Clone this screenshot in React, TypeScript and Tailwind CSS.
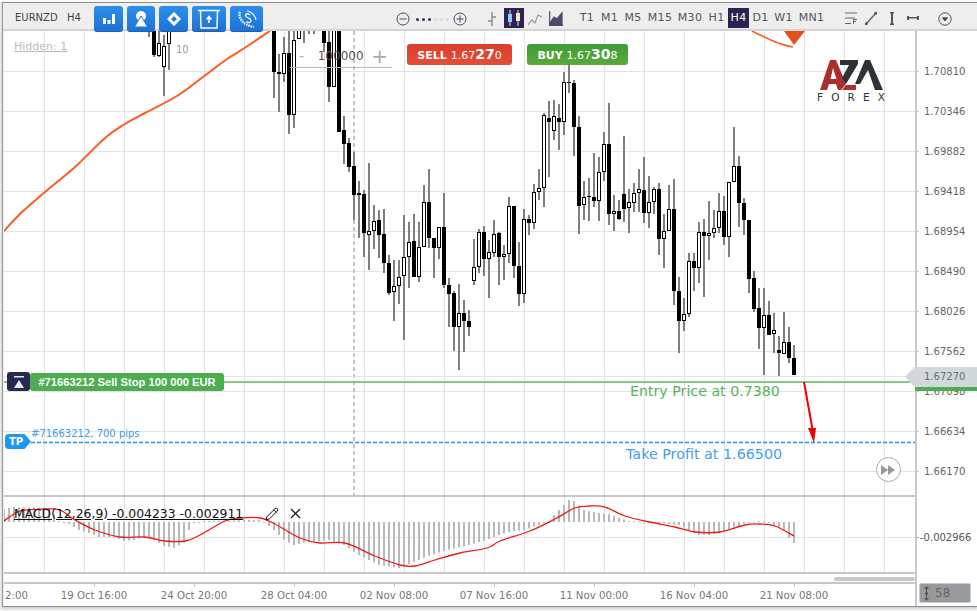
import { Pencil, X } from 'lucide-react';

// [x, wickTop, bodyTop, bodyBottom, wickBottom, filled]
type Candle = [number, number, number, number, number, number];

const candles: Candle[] = [
  [149, 20, 20, 30, 37, 0],
  [154, 20, 20, 55, 57, 1],
  [159, 30, 43, 56, 57, 0],
  [164, 35, 46, 67, 96, 0],
  [169, 20, 20, 44, 70, 0],
  [274, 20, 20, 72, 98, 1],
  [279, 54, 72, 74, 112, 1],
  [284, 37, 53, 74, 82, 0],
  [289, 20, 53, 115, 134, 1],
  [294, 20, 40, 115, 128, 0],
  [299, 20, 20, 39, 39, 0],
  [304, 20, 20, 30, 43, 0],
  [309, 20, 20, 30, 34, 0],
  [314, 20, 20, 30, 34, 0],
  [324, 20, 20, 43, 52, 1],
  [329, 20, 42, 87, 102, 1],
  [334, 20, 20, 87, 87, 0],
  [339, 20, 20, 132, 132, 1],
  [344, 116, 130, 144, 164, 1],
  [349, 138, 143, 167, 172, 1],
  [354, 152, 166, 195, 220, 1],
  [359, 181, 193, 195, 238, 1],
  [364, 190, 194, 233, 257, 1],
  [369, 163, 231, 235, 270, 0],
  [374, 205, 221, 231, 249, 0],
  [379, 210, 220, 235, 258, 1],
  [384, 209, 234, 263, 273, 1],
  [389, 255, 263, 293, 295, 1],
  [394, 260, 286, 292, 321, 0],
  [399, 260, 277, 286, 304, 0],
  [404, 215, 257, 276, 340, 0],
  [409, 222, 242, 257, 288, 0],
  [414, 214, 241, 277, 277, 1],
  [419, 222, 247, 277, 282, 0],
  [424, 185, 202, 247, 247, 0],
  [429, 169, 202, 238, 248, 1],
  [434, 238, 238, 248, 278, 1],
  [439, 227, 227, 248, 259, 0],
  [444, 193, 227, 285, 288, 1],
  [449, 278, 285, 294, 327, 1],
  [454, 291, 293, 327, 351, 1],
  [459, 284, 313, 327, 370, 0],
  [464, 300, 313, 321, 352, 1],
  [469, 310, 321, 327, 336, 1],
  [474, 239, 267, 281, 285, 0],
  [479, 229, 232, 267, 273, 0],
  [484, 226, 232, 259, 276, 1],
  [489, 240, 252, 259, 298, 0],
  [494, 220, 234, 253, 257, 0],
  [499, 232, 233, 257, 285, 1],
  [504, 245, 254, 257, 280, 0],
  [509, 197, 206, 254, 263, 0],
  [514, 206, 206, 266, 278, 1],
  [519, 242, 266, 294, 306, 1],
  [524, 209, 219, 294, 303, 0],
  [529, 215, 219, 223, 235, 1],
  [534, 184, 192, 223, 229, 0],
  [539, 169, 188, 192, 200, 0],
  [544, 113, 115, 188, 207, 0],
  [549, 101, 118, 122, 177, 1],
  [554, 100, 116, 131, 140, 0],
  [559, 104, 118, 122, 150, 1],
  [564, 72, 82, 122, 135, 0],
  [569, 60, 82, 83, 93, 1],
  [574, 80, 83, 127, 156, 1],
  [579, 116, 127, 206, 234, 1],
  [584, 181, 197, 205, 220, 0],
  [589, 178, 196, 197, 221, 1],
  [594, 153, 197, 201, 207, 1],
  [599, 157, 172, 201, 221, 0],
  [604, 132, 144, 172, 181, 0],
  [609, 103, 144, 214, 225, 1],
  [614, 195, 211, 214, 231, 0],
  [619, 200, 211, 219, 220, 1],
  [624, 136, 194, 209, 222, 1],
  [629, 189, 202, 208, 233, 0],
  [634, 183, 193, 203, 212, 0],
  [639, 169, 189, 193, 212, 0],
  [644, 157, 190, 213, 223, 1],
  [649, 176, 202, 213, 228, 0],
  [654, 187, 189, 202, 214, 0],
  [659, 183, 189, 239, 255, 1],
  [664, 214, 231, 239, 268, 0],
  [669, 185, 209, 231, 231, 0],
  [674, 179, 209, 291, 305, 1],
  [679, 277, 291, 321, 353, 1],
  [684, 298, 314, 321, 331, 0],
  [689, 253, 261, 314, 317, 0],
  [694, 253, 261, 268, 291, 1],
  [699, 222, 232, 268, 283, 0],
  [704, 219, 232, 236, 297, 1],
  [709, 201, 233, 236, 260, 0],
  [714, 210, 228, 233, 238, 0],
  [719, 193, 211, 228, 233, 0],
  [724, 196, 211, 237, 245, 1],
  [729, 182, 182, 237, 257, 0],
  [734, 127, 166, 182, 182, 0],
  [739, 156, 166, 203, 227, 1],
  [744, 198, 203, 220, 235, 1],
  [749, 220, 220, 279, 293, 1],
  [754, 271, 278, 309, 312, 1],
  [759, 288, 308, 328, 349, 1],
  [764, 288, 315, 328, 375, 0],
  [769, 301, 315, 335, 335, 1],
  [774, 313, 330, 334, 353, 0],
  [779, 336, 350, 353, 377, 1],
  [784, 312, 342, 354, 354, 0],
  [789, 327, 342, 358, 363, 1],
  [794, 345, 358, 375, 375, 1],
];

const gridX = Array.from({ length: 22 }, (_, i) => 44 + i * 40);
const gridY = [71, 111, 151, 191, 231, 271, 311, 351, 391, 431, 471];
const prices = ['1.70810', '1.70346', '1.69882', '1.69418', '1.68954', '1.68490', '1.68026', '1.67562', '1.67098', '1.66634', '1.66170'];
const timeframes = [
  { t: 'T1', w: 'w-[22px]' },
  { t: 'M1', w: 'w-[23px]' },
  { t: 'M5', w: 'w-[24px]' },
  { t: 'M15', w: 'w-[30px]' },
  { t: 'M30', w: 'w-[30px]' },
  { t: 'H1', w: 'w-[23px]' },
  { t: 'H4', w: 'w-[21px]' },
  { t: 'D1', w: 'w-[23px]' },
  { t: 'W1', w: 'w-[23px]' },
  { t: 'MN1', w: 'w-[33px]' },
];
const times = ['19 Oct 16:00', '24 Oct 20:00', '28 Oct 04:00', '02 Nov 08:00', '07 Nov 16:00', '11 Nov 00:00', '16 Nov 04:00', '21 Nov 08:00'];

// histogram outline, x then y of the bar end (zero line is y=522)
const histPts: [number, number][] = [
  [4, 509], [14, 507], [49, 508], [59, 521], [69, 524], [79, 530], [89, 533], [99, 537], [114, 537], [124, 541], [134, 540], [144, 537], [154, 540], [164, 546], [174, 548], [184, 543], [189, 530], [194, 523],
  [204, 521], [259, 520], [264, 522], [274, 530], [284, 540], [294, 545], [309, 542], [329, 540], [344, 545], [359, 555], [379, 565], [399, 568], [414, 562], [429, 556], [444, 551], [469, 545], [489, 539], [499, 535],
  [509, 532], [524, 530], [539, 525], [549, 522], [554, 515], [564, 505], [569, 500], [574, 501], [584, 510], [599, 513], [609, 514], [619, 518], [629, 521], [649, 522], [669, 524], [679, 525], [689, 530], [699, 535], [709, 535],
  [719, 533], [729, 529], [739, 526], [749, 522], [759, 521], [769, 522], [774, 526], [784, 530], [789, 538], [794, 543],
];

const histAt = (x: number) => {
  for (let i = 1; i < histPts.length; i++) {
    const [x0, y0] = histPts[i - 1];
    const [x1, y1] = histPts[i];
    if (x <= x1) return y0 + ((y1 - y0) * (x - x0)) / (x1 - x0);
  }
  return 522;
};

const histBars = Array.from({ length: 159 }, (_, i) => 4 + i * 5);

const signal: [number, number][] = [
  [4, 521], [20, 511], [45, 509], [60, 510], [75, 520], [95, 530], [120, 537], [145, 537], [165, 541], [185, 541], [200, 535], [225, 521], [240, 518], [260, 518], [275, 524], [300, 538], [320, 543], [345, 543], [375, 556], [400, 565], [415, 566], [435, 560], [460, 553], [487, 548],
  [500, 541], [530, 531], [555, 519], [575, 508], [590, 506], [605, 507], [625, 516], [650, 522], [675, 527], [695, 532], [720, 532], [745, 525], [760, 524], [775, 526], [794, 536],
];

const ma: [number, number][] = [[4, 231], [22, 212], [45, 192], [75, 167], [105, 138], [125, 124], [145, 113], [177, 96], [203, 77], [227, 59], [243, 49], [270, 31]];

// catmull-rom through the points so the lines don't look angular
const smooth = (pts: [number, number][]) => {
  let d = `M${pts[0][0]} ${pts[0][1]}`;
  for (let i = 0; i < pts.length - 1; i++) {
    const p0 = pts[Math.max(i - 1, 0)];
    const p1 = pts[i];
    const p2 = pts[i + 1];
    const p3 = pts[Math.min(i + 2, pts.length - 1)];
    d += `C${p1[0] + (p2[0] - p0[0]) / 6} ${p1[1] + (p2[1] - p0[1]) / 6} ${p2[0] - (p3[0] - p1[0]) / 6} ${p2[1] - (p3[1] - p1[1]) / 6} ${p2[0]} ${p2[1]}`;
  }
  return d;
};

function BlueButton({ w, children }: { w: string; children: React.ReactNode }) {
  return (
    <div className={`${w} h-[26px] rounded-[3px] bg-gradient-to-b from-[#2d8fea] to-[#1d72d4] border-b border-[#1a5fb0] flex items-center justify-center`}>
      {children}
    </div>
  );
}

function Toolbar() {
  return (
    <div className="h-[28px] shrink-0 bg-[#eeeeee] border-b-2 border-[#d4d4d4] flex items-start relative z-10 text-[#555]">
      <span className="ml-[12px] mt-[9px] w-[52px] text-[10px] leading-[12px] text-[#444]">EURNZD</span>
      <span className="w-[27px] mt-[9px] text-[10px] leading-[12px] text-[#444]">H4</span>
      <div className="flex gap-[4px] mt-[3px]">
        <BlueButton w="w-[29px]">
          <svg width="12" height="10" viewBox="0 0 12 10" fill="white"><rect y="4" width="3" height="6" /><rect x="4.5" y="6" width="3" height="4" /><rect x="9" width="3" height="10" /></svg>
        </BlueButton>
        <BlueButton w="w-[28px]">
          <svg width="14" height="16" viewBox="0 0 14 16" fill="white"><circle cx="7" cy="5" r="5" /><path d="M7 5 13.5 16H.5Z" stroke="#2580df" strokeWidth="1" /></svg>
        </BlueButton>
        <BlueButton w="w-[29px]">
          <svg width="14" height="14" viewBox="0 0 14 14"><path d="M7 2 12 7 7 12 2 7Z" fill="none" stroke="white" strokeWidth="3" /></svg>
        </BlueButton>
        <BlueButton w="w-[34px]">
          <svg width="24" height="20" viewBox="0 0 24 20" fill="none" stroke="white"><path d="M1 1.5H23" strokeWidth="1.5" /><path d="M3.5 1.5 4 19H20L20.5 1.5" strokeWidth="1.4" /><path d="M12 14V8M9.5 10.5 12 7.5 14.5 10.5" strokeWidth="1.5" /></svg>
        </BlueButton>
        <BlueButton w="w-[33px]">
          <svg width="20" height="20" viewBox="0 0 20 20" fill="none" stroke="white" strokeWidth="1.3"><path d="M3 3C1 8 5 16 17 18" strokeDasharray="1.5 1" strokeWidth="2.4" /><path d="M13 6C11 3.5 7.5 5 9 7.5 10 9 14 9 14 11.5 14 14 11 14 9.5 12.5" /><path d="M10 2C14 2 18 6 19 11" strokeWidth="1.2" /></svg>
        </BlueButton>
      </div>

      <div className="ml-[133px] mt-[9px] flex items-center">
        <svg width="14" height="14" viewBox="0 0 14 14" fill="none" stroke="#4a4a68" strokeWidth="1"><circle cx="7" cy="7" r="6" /><path d="M3.5 7H10.5" /></svg>
        <div className="ml-[6px] mr-[3px] flex gap-[3px] items-center w-[34px]">
          <i className="w-[3px] h-[3px] rounded-full bg-[#33304f]" />
          <i className="w-[3px] h-[3px] rounded-full bg-[#33304f]" />
          <i className="w-[3px] h-[3px] rounded-full bg-[#33304f]" />
          <i className="w-[3px] h-[3px] rounded-full bg-[#d8d8d8]" />
          <i className="w-[3px] h-[3px] rounded-full bg-[#d8d8d8]" />
          <i className="w-[3px] h-[3px] rounded-full bg-[#d8d8d8]" />
        </div>
        <svg width="14" height="14" viewBox="0 0 14 14" fill="none" stroke="#4a4a68" strokeWidth="1"><circle cx="7" cy="7" r="6" /><path d="M3.5 7H10.5M7 3.5V10.5" /></svg>
      </div>

      <svg className="ml-[20px] mt-[9px]" width="10" height="14" viewBox="0 0 10 14" fill="none" stroke="#888" strokeWidth="1.4"><path d="M5 0V14M1 9H5M5 5H9" /></svg>
      <div className="ml-[7px] mt-[5px] w-[20px] h-[20px] bg-[#2e2250] flex items-center justify-center gap-[3px]">
        <svg width="16" height="16" viewBox="0 0 16 16"><path d="M4 0V16M12 0V16" stroke="#e9e4f5" strokeWidth="1" /><rect x="2" y="4" width="4" height="8" fill="#8fd0f0" /><rect x="10" y="3" width="4" height="8" fill="#f3e6c8" /></svg>
      </div>
      <svg className="ml-[4px] mt-[9px]" width="14" height="14" viewBox="0 0 14 14" fill="none" stroke="#999" strokeWidth="1.2"><path d="M0 13 4 8 7 11 10 3 14 5" /></svg>
      <svg className="ml-[7px] mt-[8px]" width="14" height="15" viewBox="0 0 14 15" fill="none" stroke="#4d4a68" strokeWidth="1.2"><path d="M.7 0V14.3H14" /><path d="M1 12 5 6 8 8 13 2V14H1Z" fill="#4d4a68" /></svg>

      <div className="ml-[13px] mt-[5px] flex text-[11px] leading-[20px] tracking-[0.3px] text-center text-[#555]">
        {timeframes.map(({ t, w }) => (
          <span key={t} className={`${w} ${t === 'H4' ? 'bg-[#2e2250] text-white' : ''}`}>{t}</span>
        ))}
      </div>

      <svg className="ml-[16px] mt-[9px]" width="14" height="13" viewBox="0 0 14 13" fill="none" stroke="#666" strokeWidth="1"><path d="M1 1H13M1 6H11M1 11.5H7M9.5 12V7.5H13M9.5 9.5H12" /></svg>
      <svg className="ml-[7px] mt-[9px]" width="12" height="13" viewBox="0 0 12 13" fill="none" stroke="#555" strokeWidth="1.2"><path d="M1 12 11 1" /><circle cx="1.2" cy="11.8" r=".9" fill="#555" /><circle cx="10.8" cy="1.2" r=".9" fill="#555" /></svg>
      <svg className="ml-[13px] mt-[9px]" width="4" height="13" viewBox="0 0 4 13" fill="#555"><rect x="1" width="2" height="13" /><rect y="0" width="4" height="1.5" /><rect y="11.5" width="4" height="1.5" /></svg>
      <svg className="ml-[13px] mt-[13px]" width="12" height="4" viewBox="0 0 12 4" fill="#555"><rect y="1" width="12" height="1.5" /><rect width="2" height="4" /><rect x="10" width="2" height="4" /></svg>
      <svg className="ml-[19px] mt-[9px]" width="14" height="14" viewBox="0 0 14 14" fill="none" stroke="#555" strokeWidth="1"><circle cx="7" cy="7" r="6.2" /><path d="M4.5 5.8H9.5L7 9Z" fill="#444" /></svg>
    </div>
  );
}

function PriceChart() {
  return (
    <div className="relative h-[464px] overflow-hidden">
      {/* drawing uses page coordinates, chart pane starts at 4,31 */}
      <svg width="911" height="464" viewBox="4 31 911 464" className="block">
        {gridX.map((x) => <line key={x} x1={x + 0.5} x2={x + 0.5} y1="31" y2="496" stroke="#e3e3e3" />)}
        {gridY.map((y) => <line key={y} x1="4" x2="915" y1={y + 0.5} y2={y + 0.5} stroke="#e3e3e3" />)}
        <line x1="354" x2="354" y1="31" y2="496" stroke="#c4c4c4" strokeWidth="2" strokeDasharray="4 3" />
        <path d={smooth(ma)} fill="none" stroke="#ff5a22" strokeWidth="2" />
        <path d="M752 31C768 39 780 45 793 47" fill="none" stroke="#ff5a22" strokeWidth="1.6" />
        <polygon points="784,31 805,31 794,45" fill="#e2501f" />
        {candles.map(([x, wt, bt, bb, wb, f]) => (
          <g key={x}>
            <line x1={x} x2={x} y1={wt} y2={wb} stroke="#808080" strokeWidth="2" />
            {f ? (
              <rect x={x - 2} y={bt} width="4" height={bb - bt} fill="#000" />
            ) : (
              <rect x={x - 1.5} y={bt + 0.5} width="3" height={bb - bt - 1} fill="#fff" stroke="#000" />
            )}
          </g>
        ))}
        <line x1="4" x2="906" y1="376.5" y2="376.5" stroke="#dfe6ea" strokeWidth="1" />
        <line x1="4" x2="915" y1="382" y2="382" stroke="#5cb85c" strokeWidth="1.3" />
        <line x1="31" x2="915" y1="442.5" y2="442.5" stroke="#1e96f3" strokeWidth="1.4" strokeDasharray="4 2" />
        <line x1="804" y1="382" x2="813" y2="432" stroke="#f00000" strokeWidth="2" />
        <polygon points="808,428 816,428 814,443" fill="#f00000" />
      </svg>

      <span className="absolute left-[10px] top-[9px] text-[11px] leading-[13px] text-[#bbbbbb] underline">Hidden: 1</span>
      <span className="absolute left-[172px] top-[13px] text-[10px] leading-[12px] text-[#999]">10</span>

      <div className="absolute left-[286px] top-[14px] w-[102px] h-[23px] border-b border-[#bbb] flex items-center justify-between text-[#666]">
        <span className="text-[#aaa] text-[14px] pl-[9px]">-</span>
        <span className="ml-[6px] text-[12px] text-[#555]">100000</span>
        <span className="text-[#aaa] text-[20px] leading-[20px] pr-[4px]">+</span>
      </div>

      <div className="absolute left-[403px] top-[13px] w-[105px] h-[21px] rounded-[3px] bg-gradient-to-b from-[#dc3c2e] to-[#e34e36] text-white text-[11px] leading-[21px] font-bold text-center whitespace-nowrap">
        SELL <span className="font-normal">1.67</span><span className="text-[14px]">27</span><span className="font-normal">0</span>
      </div>
      <div className="absolute left-[523px] top-[13px] w-[101px] h-[21px] rounded-[3px] bg-gradient-to-b from-[#3f9b35] to-[#5aa93c] text-white text-[11px] leading-[21px] font-bold text-center whitespace-nowrap">
        BUY <span className="font-normal">1.67</span><span className="text-[14px]">30</span><span className="font-normal">8</span>
      </div>

      {/* logo */}
      <div className="absolute left-[813px] top-[29px] w-[68px]">
        <svg width="68" height="32" viewBox="817 60 68 32" className="block">
          <path fillRule="evenodd" d="M820 90 830 60H836L846 84 841 90H838L836 84H829L827 90ZM833 68 830.5 79H836.5Z" fill="#a8302e" />
          <path d="M842 90 846 85H856V90Z" fill="#a8302e" />
          <path d="M840 60H858V64L846 84 842 78 849 65H840Z" fill="#2f3336" />
          <path d="M865 60H870L883 90H875L868 70 860 84H855Z" fill="#2f3336" />
        </svg>
        <div className="flex justify-between text-[10.5px] leading-[11px] text-[#2f3336]">
          <span>F</span><span>O</span><span>R</span><span>E</span><span>X</span>
        </div>
      </div>

      {/* pending order */}
      <div className="absolute left-[3px] top-[341px] flex items-center">
        <div className="w-[23px] h-[19px] rounded-[3px] bg-[#262a52] flex items-center justify-center">
          <svg width="12" height="12" viewBox="0 0 12 12" fill="#e8e8f0"><rect x="1" width="10" height="1.5" /><path d="M6 4 11 12H1Z" /></svg>
        </div>
        <div className="w-[194px] h-[18px] rounded-[3px] bg-[#4cae4f] text-white font-['Liberation_Sans',sans-serif] text-[11.2px] leading-[18px] font-bold text-center whitespace-nowrap">#71663212 Sell Stop 100 000 EUR</div>
      </div>

      {/* take profit */}
      <div className="absolute left-[1px] top-[403px] w-[26px] h-[15px] bg-[#1e96f3] text-white text-[10px] leading-[15px] font-bold pl-[4px] rounded-l-[4px] [clip-path:polygon(0_0,75%_0,100%_50%,75%_100%,0_100%)]">TP</div>
      <span className="absolute left-[27px] top-[397px] text-[10px] leading-[12px] text-[#3a9bf0] whitespace-nowrap">#71663212, 700 pips</span>

      <span className="absolute left-[626px] top-[351px] text-[14.2px] leading-[18px] text-[#57b35a] whitespace-nowrap">Entry Price at 0.7380</span>
      <span className="absolute left-[622px] top-[414px] text-[14.3px] leading-[18px] text-[#3f9ff0] whitespace-nowrap">Take Profit at 1.66500</span>

      <div className="absolute left-[872px] top-[426px] w-[25px] h-[25px] rounded-full border border-[#aaa] bg-white flex items-center justify-center">
        <svg width="15" height="10" viewBox="0 0 15 10" fill="#999"><path d="M0 0 7 5 0 10ZM7 0 14 5 7 10Z" /></svg>
      </div>
    </div>
  );
}

function MacdPane() {
  return (
    <div className="relative h-[77px] border-t-2 border-[#c8c8c8] overflow-hidden">
      <svg width="911" height="75" viewBox="4 497 911 75" className="block">
        {gridX.map((x) => <line key={x} x1={x + 0.5} x2={x + 0.5} y1="497" y2="572" stroke="#e3e3e3" />)}
        <line x1="4" x2="915" y1="537.5" y2="537.5" stroke="#e3e3e3" />
        {histBars.map((x) => {
          const y = histAt(x);
          return <rect key={x} x={x - 1} y={Math.min(y, 522)} width="2" height={Math.max(Math.abs(y - 522), 1)} fill="#b9b9b9" />;
        })}
        <path d={smooth(signal)} fill="none" stroke="#f01818" strokeWidth="1.3" />
      </svg>
      <div className="absolute left-[10px] top-[8px] flex items-center">
        <span className="w-[251px] text-[12.4px] leading-[14px] text-[#111] underline whitespace-nowrap">MACD(12,26,9) -0.004233 -0.002911</span>
        <Pencil size={14} strokeWidth={1.7} className="text-[#111]" />
        <X size={17} strokeWidth={1.6} className="ml-[8px] text-[#111]" />
      </div>
    </div>
  );
}

function TimeAxis() {
  return (
    <div className="shrink-0 h-[33px]">
      <div className="relative h-[10px] border-t-2 border-[#c8c8c8]">
        <div className="absolute right-0 top-[3px] w-[81px] h-[4px] rounded-full bg-[#c8c8c8]" />
      </div>
      <div className="border-t-2 border-[#c8c8c8] flex text-[10.2px] leading-[13px] text-[#777]">
        <span className="w-[40px] pt-[5px] pl-[1px]">2:00</span>
        {times.map((t) => (
          <div key={t} className="w-[100px] flex flex-col items-center">
            <i className="w-px h-[3px] bg-[#c8c8c8]" />
            <span className="pt-[2px] whitespace-nowrap">{t}</span>
          </div>
        ))}
      </div>
    </div>
  );
}

function PriceAxis() {
  return (
    <div className="relative w-[62px] h-full border-l-2 border-[#c8c8c8] text-[10px] text-[#666]">
      <div className="h-[464px] pt-[20px]">
        {prices.map((p) => (
          <div key={p} className="h-[40px] flex items-center gap-[5px]">
            <i className="w-[2px] h-px bg-[#c8c8c8]" />
            <span>{p}</span>
          </div>
        ))}
      </div>
      <div className="h-[77px] pt-[32px]">
        <div className="h-[20px] flex items-center gap-[1px]">
          <i className="w-[2px] h-px bg-[#999]" />
          <span className="text-[#555]">-0.002966</span>
        </div>
      </div>
      {/* current price tag */}
      <div className="absolute left-[-12px] top-[336px] w-[72px] h-[20px] bg-[#d3d8dc] text-[#5b7080] leading-[20px] pl-[19px] [clip-path:polygon(0_50%,13%_0,100%_0,100%_100%,13%_100%)]">1.67270</div>
      <div className="absolute left-[-2px] right-0 top-[356px] h-[4px] bg-[#4cae4f]" />
      <div className="absolute left-[2px] top-[552px] w-[52px] h-[20px] bg-[#9a9a9a] border border-[#b6cfe4] rounded-[2px] flex items-center pl-[4px] gap-[6px] text-[12px] text-[#666]">
        <svg width="5" height="15" viewBox="0 0 5 15" fill="#555"><path d="M2.5 0 5 3H0ZM2.5 15 5 12H0Z" /><rect x="2" y="3" width="1" height="9" /><rect x="1" y="6.5" width="3" height="2" /></svg>
        <span>58</span>
      </div>
    </div>
  );
}

export default function App() {
  return (
    <div className="w-[977px] h-[611px] overflow-hidden bg-[#f4f4f4] font-['DejaVu_Sans',sans-serif]">
      <div className="h-[2px] bg-white" />
      <div className="h-[605px] border-y border-l border-y-[#8f8f8f] border-l-[#9a9a9a] ml-[2px] bg-white flex flex-col shadow-[0_1px_3px_#bbb]">
        <Toolbar />
        <div className="flex flex-1 pl-px bg-[#eeeeee]">
          <div className="flex-1 min-w-0 bg-white flex flex-col">
            <PriceChart />
            <MacdPane />
            <TimeAxis />
          </div>
          <div className="bg-white"><PriceAxis /></div>
        </div>
      </div>
    </div>
  );
}
